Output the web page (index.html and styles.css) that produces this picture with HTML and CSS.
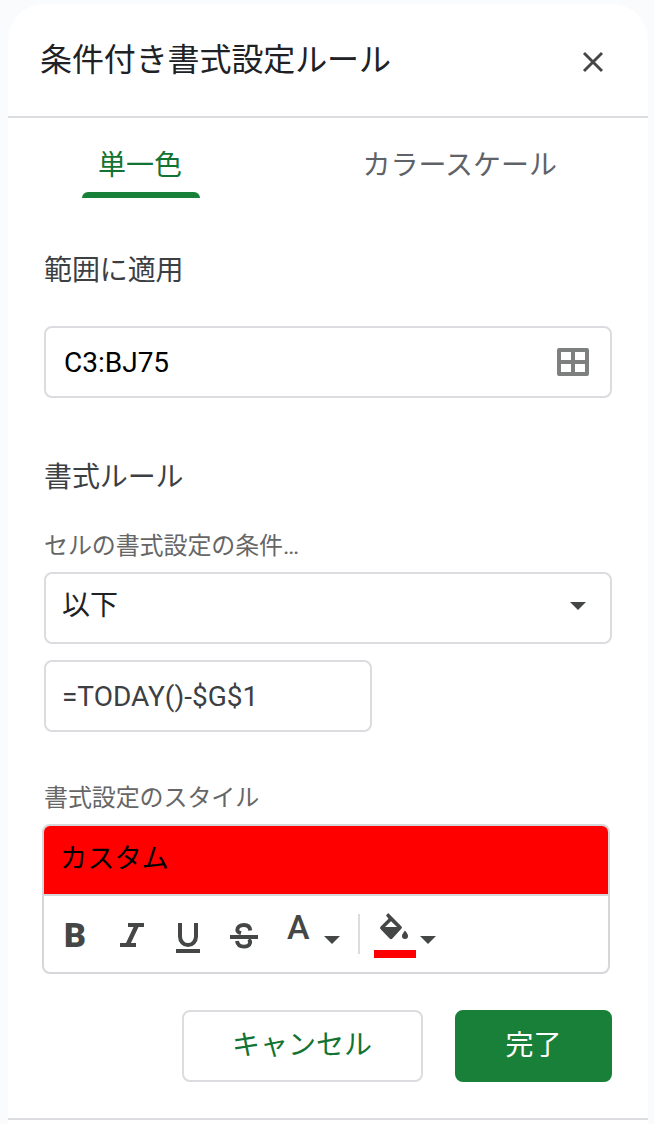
FILE: index.html
```html
<!DOCTYPE html>
<html lang="ja">

<head>
    <meta charset="UTF-8">
    <meta name="viewport" content="width=device-width, initial-scale=1.0">
    <title>条件付き書式設定ルール</title>
    <link rel="stylesheet" href="styles.css">
</head>

<body>
    <div class="panel">
        <div class="header">
            <h2 class="title">条件付き書式設定ルール</h2>
            <button type="button" class="close" aria-label="閉じる">
                <svg width="22" height="22" viewBox="0 0 22 22">
                    <path d="M2 2l18 18M20 2L2 20" fill="none" stroke="#444746" stroke-width="2.9" />
                </svg>
            </button>
        </div>

        <div class="tabs">
            <div class="tab active">単一色</div>
            <div class="tab">カラースケール</div>
        </div>

        <form>
            <h3 class="heading">範囲に適用</h3>
            <div class="field range">
                <span>C3:BJ75</span>
                <svg width="32" height="28" viewBox="0 0 32 28">
                    <path fill="#7e807f" fill-rule="evenodd" d="M2 0h28a2 2 0 0 1 2 2v24a2 2 0 0 1-2 2H2a2 2 0 0 1-2-2V2a2 2 0 0 1 2-2zM4 4v8h10V4zM18 4v8h10V4zM4 16v8h10v-8zM18 16v8h10v-8z" />
                </svg>
            </div>

            <h3 class="heading rules">書式ルール</h3>
            <div class="label">セルの書式設定の条件…</div>
            <div class="field select">
                <span>以下</span>
                <span class="caret"></span>
            </div>
            <div class="field value">=TODAY()-$G$1</div>

            <div class="label style-label">書式設定のスタイル</div>
            <div class="style-box">
                <div class="preview">カスタム</div>
                <div class="toolbar">
                    <span class="tool bold">B</span>
                    <svg class="tool" width="24" height="24" viewBox="0 0 24 24">
                        <path d="M8 2h16M0 22h16" fill="none" stroke="#444746" stroke-width="4" />
                        <path d="M16.5 3L8 21" fill="none" stroke="#444746" stroke-width="4.4" />
                    </svg>
                    <svg class="tool" width="24" height="30" viewBox="0 0 24 30">
                        <path d="M4 0v13.5a8 8.5 0 0 0 16 0V0" fill="none" stroke="#444746" stroke-width="4" />
                        <path d="M0 28h24" stroke="#444746" stroke-width="4" />
                    </svg>
                    <svg class="tool" width="28" height="26" viewBox="0 0 28 26">
                        <path d="M20.3 7.500C20 4 17.500 2 14 2C10 2 7.300 4 7.300 7C7.300 8.500 8.500 9.500 11 10.200M18.500 16.500C20 17.500 20.500 18.500 20 20C19.300 22.500 17 23.600 14 23.600C10 23.600 7.500 21.500 7 18" fill="none" stroke="#444746" stroke-width="3.900" />
                        <path d="M0 14h28" stroke="#444746" stroke-width="4" />
                    </svg>
                    <span class="tool text-color">A</span>
                    <span class="caret"></span>
                    <span class="divider"></span>
                    <div class="fill-color">
                        <svg width="28" height="27" viewBox="0 0 28 27">
                            <path fill="#444746" fill-rule="evenodd" d="M8.200 0L21.300 13.200a1.800 1.800 0 0 1 0 2.500L12.400 25.500a2 2 0 0 1-2.800 0L.7 16.300a2 2 0 0 1 0-2.700L8.500 5.800L6 2.400zM11 8.300L5 14h12z" />
                            <path fill="#444746" d="M25 17.500c2 2.500 3 4 3 5.500a3 3 0 0 1-6 0c0-1.500 1-3 3-5.500z" />
                        </svg>
                        <span class="swatch"></span>
                    </div>
                    <span class="caret"></span>
                </div>
            </div>

            <div class="buttons">
                <button type="button" class="btn cancel">キャンセル</button>
                <button type="button" class="btn done">完了</button>
            </div>
        </form>
    </div>
</body>

</html>
```

FILE: styles.css
```css
* {
    margin: 0;
    padding: 0;
    box-sizing: border-box;
}

body {
    height: 1124px;
    padding: 4px 6px 0 8px;
    overflow: hidden;
    background-color: #f9fbfd;
    font-family: Roboto, "Noto Sans CJK JP", sans-serif;
    font-size: 28px;
    color: #202124;
}

.panel {
    height: 1120px;
    background-color: #fff;
    border-radius: 36px 36px 0 0;
}

.header {
    display: flex;
    justify-content: space-between;
    height: 114px;
    padding: 32px 44px 0 32px;
    border-bottom: 2px solid #dadce0;
}

.title {
    font-size: 32px;
    font-weight: 400;
    line-height: 48px;
    letter-spacing: -0.1px;
}

.close {
    display: flex;
    height: 22px;
    margin-top: 15px;
    border: none;
    background: none;
}

.tabs {
    display: flex;
    justify-content: space-between;
    height: 80px;
    padding: 0 75px 0 74px;
}

.tab {
    padding: 28px 16px 0;
    line-height: 40px;
    color: #5f6368;
}

.tab.active {
    display: flex;
    flex-direction: column;
    justify-content: space-between;
    width: 118px;
    color: #137333;
}

.tab.active::after {
    content: '';
    height: 6px;
    margin: 0 -16px;
    border-radius: 6px 6px 0 0;
    background-color: #188038;
}

form {
    height: 922px;
    padding: 53px 36px 0;
    border-bottom: 2px solid #dadce0;
}

.heading {
    font-size: 28px;
    font-weight: 400;
    line-height: 40px;
    letter-spacing: -0.1px;
    color: #3c4043;
}

.heading.rules {
    margin-top: 60px;
}

.field {
    display: flex;
    justify-content: space-between;
    align-items: center;
    height: 72px;
    padding: 0 16px;
    border: 2px solid #dadce0;
    border-radius: 8px;
}

.range {
    margin-top: 35px;
    padding: 0 21px 0 18px;
    color: #000;
}

.label {
    font-size: 24px;
    line-height: 36px;
    letter-spacing: -0.1px;
    color: #666;
}

.rules + .label {
    margin: 30px 0 8px;
}

.select {
    padding: 0 24px 4px 16px;
}

.select span:first-child {
    padding-bottom: 6px;
}

.caret {
    border: 8px solid transparent;
    border-top-color: #444746;
    border-bottom: none;
}

.value {
    width: 328px;
    margin-top: 16px;
    color: #3c4043;
}

.style-label {
    margin: 48px 0 8px;
}

.style-box {
    width: 568px;
    height: 150px;
    margin-left: -2px;
    border: 2px solid #d5d7da;
    border-radius: 8px;
    overflow: hidden;
}

.preview {
    height: 70px;
    padding-left: 16px;
    border-bottom: 2px solid #d5d7da;
    background-color: #f00;
    font-size: 27.2px;
    line-height: 67px;
    color: #000;
}

.toolbar {
    display: flex;
    align-items: flex-start;
    height: 76px;
    padding-left: 20px;
    color: #444746;
}

.tool {
    flex: none;
    margin-top: 27px;
}

.toolbar svg.tool {
    margin-right: 32px;
}

.toolbar svg.tool:nth-child(4) {
    margin: 27px 28px 0 -2px;
}

.bold {
    width: 56px;
    font-size: 34px;
    font-weight: 900;
    line-height: 24px;
}

.text-color {
    width: 38px;
    margin-top: 19px;
    padding-left: 1px;
    font-size: 34px;
    font-weight: 500;
    line-height: 24px;
}

.toolbar .caret {
    margin-top: 40px;
}

.divider {
    width: 2px;
    height: 40px;
    margin: 18px 14px 0 18px;
    background-color: #dadce0;
}

.fill-color {
    display: flex;
    flex-direction: column;
    justify-content: space-between;
    width: 42px;
    height: 45px;
    margin: 17px 4px 0 0;
    padding-left: 6px;
}

.swatch {
    width: 42px;
    height: 8px;
    margin-left: -6px;
    background-color: #f00;
}

.buttons {
    display: flex;
    justify-content: flex-end;
    gap: 32px;
    margin-top: 36px;
}

.btn {
    height: 72px;
    padding-bottom: 6px;
    border: 2px solid #dadce0;
    border-radius: 8px;
    background-color: #fff;
    font-family: inherit;
    font-size: 28px;
    color: #137333;
}

.cancel {
    width: 241px;
    padding-right: 1px;
}

.done {
    width: 157px;
    border-color: #188038;
    background-color: #188038;
    color: #fff;
}
```
